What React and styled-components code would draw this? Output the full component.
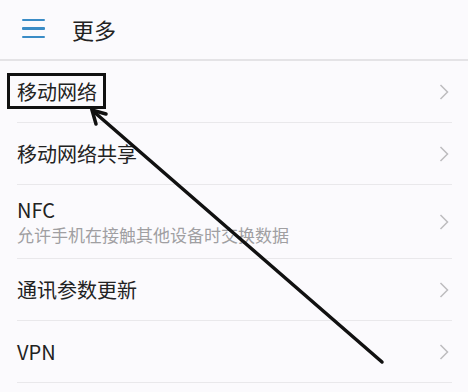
import React from "react";
import styled, { createGlobalStyle } from "styled-components";

const GlobalStyle = createGlobalStyle`
  html, body {
    margin: 0;
    padding: 0;
    background: #fbfafd;
    font-family: "Noto Sans CJK SC", "Noto Sans", sans-serif;
  }
`;

const Screen = styled.div`
  position: relative;
  width: 468px;
  height: 392px;
  overflow: hidden;
  background: #fbfafd;
`;

const Header = styled.header`
  height: 61px;
  display: flex;
  align-items: center;
  gap: 27px;
  padding-left: 22px;
  padding-bottom: 2px;
  border-bottom: 2px solid #e4e3e6;
  box-sizing: border-box;
`;

const Burger = styled.div`
  width: 23px;
  display: flex;
  flex-direction: column;
  gap: 6px;
  span {
    display: block;
    height: 2.5px;
    background: #3a8cc6;
    border-radius: 1px;
  }
`;

const Title = styled.h1`
  margin: 0;
  font-size: 22px;
  font-weight: 400;
  color: #222;
  line-height: 1;
`;

const List = styled.ul`
  list-style: none;
  margin: 0;
  padding: 0 16px 0 17px;
`;

const Row = styled.li`
  height: ${(p) => (p.tall ? 74 : 62)}px;
  display: flex;
  align-items: center;
  justify-content: space-between;
  border-bottom: 1px solid #e9e8eb;
  box-sizing: border-box;
`;

const Texts = styled.div`
  display: flex;
  flex-direction: column;
  gap: 3px;
`;

const Label = styled.span`
  font-size: 20px;
  color: #222;
  line-height: 1.2;
`;

const Sub = styled.span`
  font-size: 17px;
  color: #a09fa2;
  line-height: 1.2;
`;

const Chevron = styled.svg`
  width: 10px;
  height: 16px;
  margin-right: 3px;
`;

const Highlight = styled.div`
  position: absolute;
  left: 7px;
  top: 73px;
  width: 99px;
  height: 36px;
  border: 3px solid #111;
  box-sizing: border-box;
`;

const ArrowLayer = styled.svg`
  position: absolute;
  left: 0;
  top: 0;
  pointer-events: none;
`;

const items = [
  { label: "移动网络" },
  { label: "移动网络共享" },
  { label: "NFC", sub: "允许手机在接触其他设备时交换数据" },
  { label: "通讯参数更新" },
  { label: "VPN" },
];

export default function App() {
  return (
    <Screen>
      <GlobalStyle />
      <Header>
        <Burger>
          <span />
          <span />
          <span />
        </Burger>
        <Title>更多</Title>
      </Header>
      <List>
        {items.map((it) => (
          <Row key={it.label} tall={it.sub ? 1 : 0}>
            <Texts>
              <Label>{it.label}</Label>
              {it.sub && <Sub>{it.sub}</Sub>}
            </Texts>
            <Chevron viewBox="0 0 10 16">
              <path d="M1.5 1 L8.5 8 L1.5 15" fill="none" stroke="#bdbcbf" strokeWidth="1.5" />
            </Chevron>
          </Row>
        ))}
      </List>
      <Highlight />
      <ArrowLayer width="468" height="392" viewBox="0 0 468 392">
        <path d="M382 362 L93 111" stroke="#111" strokeWidth="3.5" fill="none" strokeLinecap="round" />
        <path d="M106 114 L92 110 L96 124" stroke="#111" strokeWidth="3.5" fill="none" strokeLinejoin="miter" strokeLinecap="round" />
      </ArrowLayer>
    </Screen>
  );
}
